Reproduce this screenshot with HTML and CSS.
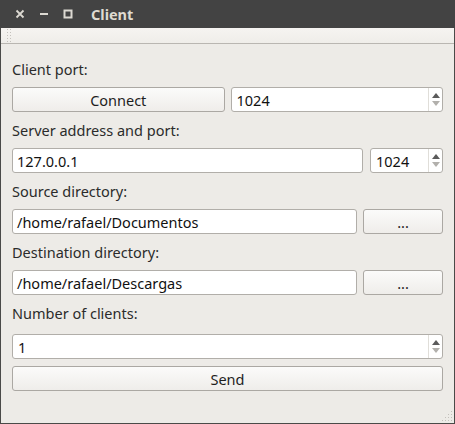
FILE: index.html
```html
<!DOCTYPE html>
<html>
<head>
<meta charset="utf-8">
<link rel="stylesheet" href="styles.css">
</head>
<body>
<div class="window">
  <div class="titlebar">
    <div class="controls">
      <svg class="ctl" width="10" height="10" viewBox="0 0 10 10"><path d="M1.5 1.5 L8.5 8.5 M8.5 1.5 L1.5 8.5" stroke="#dcd9d2" stroke-width="1.8" fill="none"/></svg>
      <svg class="ctl" width="10" height="10" viewBox="0 0 10 10"><path d="M1 5 H9" stroke="#dcd9d2" stroke-width="2" fill="none"/></svg>
      <svg class="ctl" width="10" height="10" viewBox="0 0 10 10"><rect x="1.5" y="1.5" width="7" height="7" stroke="#dcd9d2" stroke-width="2" fill="none"/></svg>
    </div>
    <span class="title">Client</span>
  </div>
  <div class="toolbar"><span class="handle"></span></div>
  <div class="content">
    <div class="label">Client port:</div>
    <div class="row row-half">
      <button class="btn">Connect</button>
      <div class="spin"><span class="val">1024</span><span class="arrows"><span class="up"></span><span class="down"></span></span></div>
    </div>
    <div class="label">Server address and port:</div>
    <div class="row row-port">
      <div class="field"><span class="val">127.0.0.1</span></div>
      <div class="spin"><span class="val">1024</span><span class="arrows"><span class="up"></span><span class="down"></span></span></div>
    </div>
    <div class="label">Source directory:</div>
    <div class="row row-dir">
      <div class="field"><span class="val">/home/rafael/Documentos</span></div>
      <button class="btn">...</button>
    </div>
    <div class="label">Destination directory:</div>
    <div class="row row-dir">
      <div class="field"><span class="val">/home/rafael/Descargas</span></div>
      <button class="btn">...</button>
    </div>
    <div class="label label-last">Number of clients:</div>
    <div class="row">
      <div class="spin"><span class="val">1</span><span class="arrows"><span class="up"></span><span class="down"></span></span></div>
    </div>
    <button class="btn btn-send">Send</button>
  </div>
  <span class="grip"></span>
</div>
</body>
</html>
```
FILE: styles.css
```css
* { box-sizing: border-box; }
html, body { margin: 0; padding: 0; }
body {
  width: 455px;
  height: 424px;
  overflow: hidden;
  font-family: "Noto Sans", "DejaVu Sans", sans-serif;
  font-size: 14.5px;
  color: #2b2b2b;
}
.window {
  position: relative;
  width: 455px;
  height: 424px;
  background: #edebe7;
  border-left: 1px solid #4a4a48;
  border-right: 1px solid #4a4a48;
  border-bottom: 1px solid #4a4a48;
  display: flex;
  flex-direction: column;
}
.titlebar {
  height: 28px;
  margin: 0 -1px;
  background: #434343;
  display: flex;
  align-items: center;
  padding-left: 15px;
}
.controls {
  display: flex;
  gap: 14px;
  margin-top: -1px;
}
.ctl { display: block; }
.title {
  margin-left: 18px;
  font-weight: bold;
  font-size: 14.5px;
  color: #dfdbd2;
  margin-top: -1px;
}
.toolbar {
  height: 16px;
  background: linear-gradient(#f6f4f1, #efede9);
  border-bottom: 1px solid #b9b6b1;
  padding-left: 5px;
  display: flex;
}
.handle {
  width: 5px;
  height: 15px;
  background-image: radial-gradient(circle, #c4c1bc 0.8px, transparent 1px);
  background-size: 3px 3px;
  background-position: 0 0;
}
.content {
  padding: 15px 11px 0 11px;
  display: flex;
  flex-direction: column;
}
.label {
  height: 20px;
  line-height: 20px;
  margin-bottom: 8px;
}
.label-last { margin-bottom: 11px; }
.row {
  display: grid;
  grid-template-columns: 1fr;
  gap: 6px;
  height: 25px;
  margin-bottom: 8px;
}
.row-half { grid-template-columns: 1fr 1fr; }
.row-port { grid-template-columns: 1fr 73px; gap: 7px; }
.row-dir { grid-template-columns: 1fr 80px; gap: 6px; }
.btn {
  font: inherit;
  color: #1e1e1e;
  height: 25px;
  border: 1px solid #aba8a3;
  border-radius: 3px;
  background: linear-gradient(#fbfbfa, #efedea);
  padding: 0;
  margin: 0;
}
.btn-send { margin-top: -1px; }
.field, .spin {
  height: 25px;
  border: 1px solid #b1aea9;
  border-radius: 3px;
  background: #fff;
  display: flex;
  align-items: center;
  color: #111;
}
.val {
  flex: 1;
  padding-left: 4px;
  white-space: nowrap;
  overflow: hidden;
}
.spin .val { padding-left: 5px; }
.arrows {
  width: 14px;
  height: 23px;
  border-left: 1px solid #e0ded9;
  display: flex;
  flex-direction: column;
  align-items: center;
  justify-content: center;
  gap: 3px;
}
.up {
  width: 0; height: 0;
  border-left: 4px solid transparent;
  border-right: 4px solid transparent;
  border-bottom: 5px solid #5b5b5b;
}
.down {
  width: 0; height: 0;
  border-left: 4px solid transparent;
  border-right: 4px solid transparent;
  border-top: 5px solid #b2b0ac;
}
.grip {
  position: absolute;
  right: 2px;
  bottom: 2px;
  width: 11px;
  height: 11px;
  background-image: radial-gradient(circle, #c3c0bb 0.8px, transparent 1px);
  background-size: 3px 3px;
  clip-path: polygon(100% 0, 100% 100%, 0 100%);
}
```
